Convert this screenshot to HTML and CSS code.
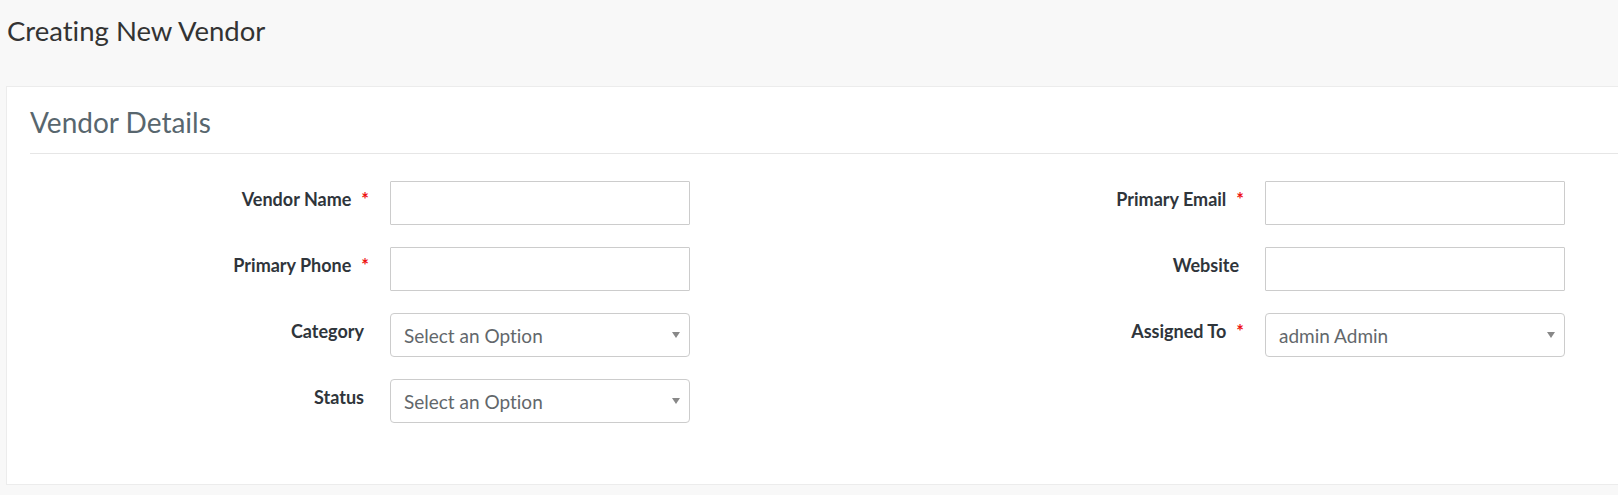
FILE: index.html
```html
<!DOCTYPE html>
<html lang="en">
<head>
<meta charset="utf-8">
<title>Creating New Vendor</title>
<link rel="stylesheet" href="styles.css">
</head>
<body>
<div class="page">
  <h1 class="page-title">Creating New Vendor</h1>
  <section class="card">
    <h2 class="card-title">Vendor Details</h2>
    <div class="form-grid">
      <div class="form-col">
        <div class="form-row">
          <label class="form-label">Vendor Name<span class="req">*</span></label>
          <input class="text-input" type="text">
        </div>
        <div class="form-row">
          <label class="form-label">Primary Phone<span class="req">*</span></label>
          <input class="text-input" type="text">
        </div>
        <div class="form-row">
          <label class="form-label plain">Category</label>
          <div class="select-box"><span class="select-text">Select an Option</span><span class="select-arrow"></span></div>
        </div>
        <div class="form-row">
          <label class="form-label plain">Status</label>
          <div class="select-box"><span class="select-text">Select an Option</span><span class="select-arrow"></span></div>
        </div>
      </div>
      <div class="form-col">
        <div class="form-row">
          <label class="form-label">Primary Email<span class="req">*</span></label>
          <input class="text-input" type="text">
        </div>
        <div class="form-row">
          <label class="form-label plain">Website</label>
          <input class="text-input" type="text">
        </div>
        <div class="form-row">
          <label class="form-label">Assigned To<span class="req">*</span></label>
          <div class="select-box"><span class="select-text">admin Admin</span><span class="select-arrow"></span></div>
        </div>
      </div>
    </div>
  </section>
</div>
</body>
</html>
```
FILE: styles.css
```css
html, body {
  margin: 0;
  padding: 0;
}
body {
  background: #f8f8f8;
  font-family: "Lato", "Open Sans", sans-serif;
  font-variant-ligatures: none;
  overflow: hidden;
  width: 1618px;
  height: 495px;
}
.page-title {
  margin: 0;
  padding: 14px 7px 0 7px;
  height: 86px;
  box-sizing: border-box;
  font-size: 27.5px;
  line-height: 34px;
  font-weight: 400;
  color: #333;
}
.card {
  margin-left: 6px;
  width: 1800px;
  background: #fff;
  border: 1px solid #ececec;
  padding: 0 0 61px 23px;
  box-sizing: border-box;
}
.card-title {
  margin: 0;
  padding: 18px 0 0 0;
  height: 67px;
  box-sizing: border-box;
  font-size: 28px;
  line-height: 34px;
  font-weight: 400;
  color: #58666e;
  border-bottom: 1px solid #e6e6e6;
}
.form-grid {
  display: grid;
  grid-template-columns: 875px 875px;
  padding-top: 27px;
}
.form-col {
  display: flex;
  flex-direction: column;
  gap: 22px;
}
.form-row {
  display: flex;
  align-items: flex-start;
  height: 44px;
}
.form-label {
  width: 360px;
  box-sizing: border-box;
  padding-right: 21px;
  padding-top: 7px;
  text-align: right;
  font-size: 18px;
  line-height: 22px;
  font-weight: 700;
  color: #2f353b;
}
.form-label.plain {
  padding-right: 26px;
}
.req {
  color: #ee1111;
  margin-left: 10px;
  font-size: 18px;
  font-weight: 700;
}
.text-input {
  width: 300px;
  height: 44px;
  box-sizing: border-box;
  border: 1px solid #cccccc;
  border-radius: 1px;
  background: #fff;
  margin: 0;
  padding: 0 12px;
  font: inherit;
}
.select-box {
  position: relative;
  width: 300px;
  height: 44px;
  box-sizing: border-box;
  border: 1px solid #cccccc;
  border-radius: 4px;
  background: #fff;
  padding: 10px 0 0 13px;
}
.select-text {
  display: block;
  font-size: 19px;
  line-height: 23px;
  color: #62676b;
}
.select-arrow {
  position: absolute;
  right: 9px;
  top: 18px;
  width: 0;
  height: 0;
  border-left: 4px solid transparent;
  border-right: 4px solid transparent;
  border-top: 6px solid #888;
}
```
